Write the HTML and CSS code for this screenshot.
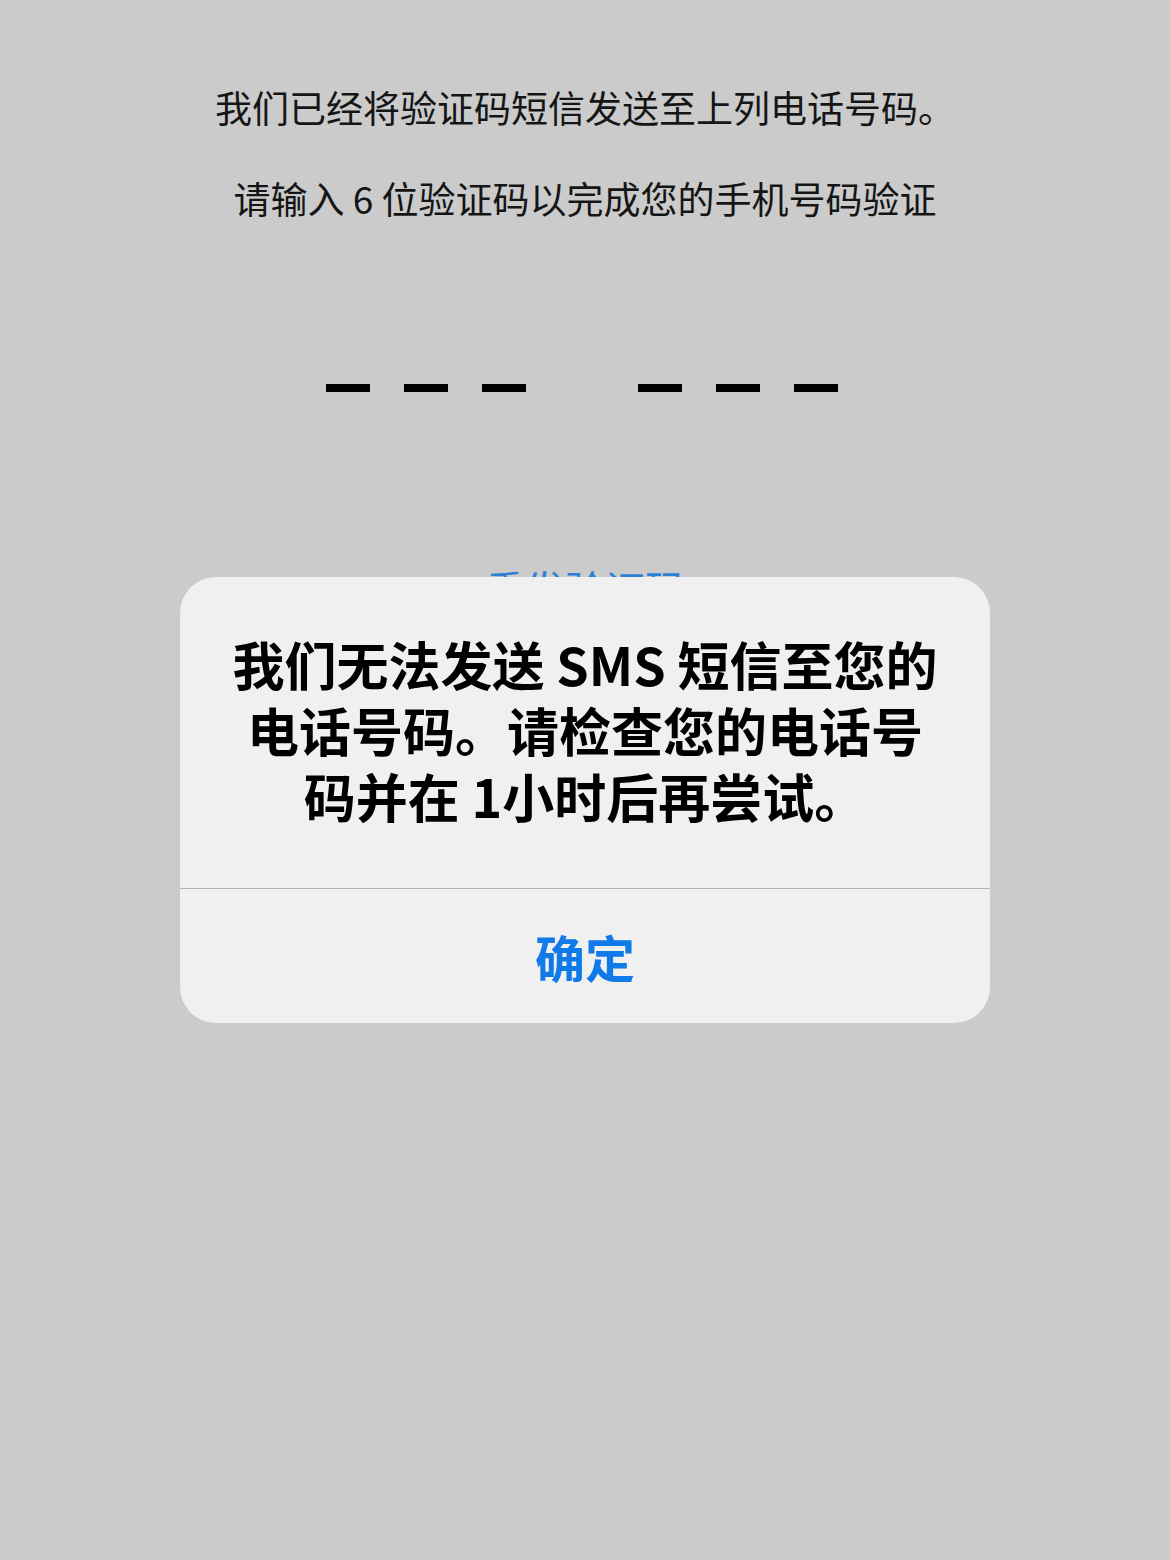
FILE: index.html
```html
<!DOCTYPE html>
<html lang="zh-CN">

<head>
    <meta charset="UTF-8">
    <title>验证码</title>
    <link rel="stylesheet" href="styles.css">
</head>

<body>
    <main class="screen">
        <p class="info">我们已经将验证码短信发送至上列电话号码。</p>
        <p class="info info-second">请输入 6 位验证码以完成您的手机号码验证</p>

        <div class="code">
            <div class="code-group">
                <span class="dash"></span>
                <span class="dash"></span>
                <span class="dash"></span>
            </div>
            <div class="code-group">
                <span class="dash"></span>
                <span class="dash"></span>
                <span class="dash"></span>
            </div>
        </div>

        <a class="resend" href="#">重发验证码</a>
    </main>

    <div class="overlay">
        <div class="alert">
            <p class="alert-title">
                <span class="title-line">我们无法发送 SMS 短信至您的</span>
                <span class="title-line">电话号码。请检查您的电话号</span>
                <span class="title-line">码并在 1小时后再尝试。</span>
            </p>
            <button class="alert-btn">确定</button>
        </div>
    </div>
</body>

</html>
```

FILE: styles.css
```css
body {
    margin: 0;
    background-color: #cbcbcb;
    font-family: "Noto Sans CJK SC", "Noto Sans", sans-serif;
    color: #151515;
}

.screen {
    display: flex;
    flex-direction: column;
    align-items: center;
    padding-top: 83px;
    min-height: 1477px;
}

.info {
    margin: 0;
    font-size: 37px;
    line-height: 48px;
}

.info-second {
    margin-top: 43px;
}

.code {
    display: flex;
    gap: 112px;
    margin-top: 162px;
    padding-right: 6px;
}

.code-group {
    display: flex;
    gap: 34px;
}

.dash {
    display: block;
    width: 44px;
    height: 8px;
    background-color: #000;
}

.resend {
    margin-top: 170px;
    font-size: 40px;
    line-height: 52px;
    color: #2b7fd6;
    text-decoration: none;
}

/* alert on top of the page */
.overlay {
    position: absolute;
    top: 0;
    left: 0;
    right: 0;
    display: flex;
    justify-content: center;
    padding-top: 577px;
}

.alert {
    width: 810px;
    background-color: rgba(241, 241, 241, 0.985);
    border-radius: 36px;
    overflow: hidden;
    text-align: center;
}

.alert-title {
    display: flex;
    flex-direction: column;
    align-items: center;
    margin: 0;
    padding: 54px 20px 59px;
    font-size: 52px;
    line-height: 66px;
    font-weight: 700;
    color: #000;
    white-space: nowrap;
    border-bottom: 1px solid #b3b3b3;
}

.title-line {
    display: block;
    height: 66px;
}

.alert-btn {
    display: block;
    width: 100%;
    height: 134px;
    border: none;
    background: none;
    font-family: inherit;
    font-size: 50px;
    font-weight: 700;
    color: #0f7ae8;
}
```
